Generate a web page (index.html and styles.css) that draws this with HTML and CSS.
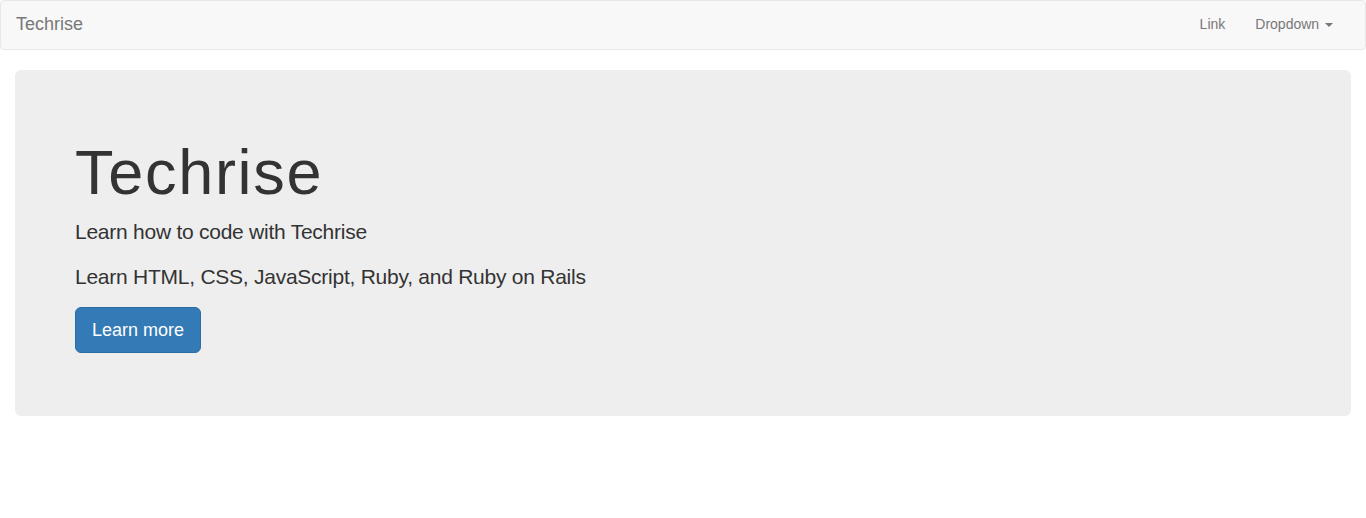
FILE: index.html
```html
<!DOCTYPE html>
<html lang="en">
<head>
<meta charset="utf-8">
<title>Techrise</title>
<link rel="stylesheet" href="styles.css">
</head>
<body>
<nav class="navbar">
  <div class="navbar-inner">
    <a class="brand" href="#">Techrise</a>
    <ul class="nav">
      <li><a href="#">Link</a></li>
      <li><a href="#">Dropdown <span class="caret"></span></a></li>
    </ul>
  </div>
</nav>
<div class="container">
  <div class="jumbotron">
    <h1>Techrise</h1>
    <p>Learn how to code with Techrise</p>
    <p>Learn HTML, CSS, JavaScript, Ruby, and Ruby on Rails</p>
    <p><a class="btn" href="#">Learn more</a></p>
  </div>
</div>
</body>
</html>
```
FILE: styles.css
```css
* { box-sizing: border-box; }
html, body {
  margin: 0;
  padding: 0;
}
body {
  font-family: "Liberation Sans", Arial, sans-serif;
  font-size: 14px;
  line-height: 1.42857143;
  color: #333;
  background: #fff;
}
a { text-decoration: none; }

.navbar {
  min-height: 50px;
  margin-bottom: 20px;
  background: #f8f8f8;
  border: 1px solid #e7e7e7;
  border-radius: 4px;
}
.navbar-inner {
  display: flex;
  justify-content: space-between;
  align-items: stretch;
  padding: 0 17px 0 0;
}
.brand {
  height: 48px;
  padding: 13px 15px 15px 15px;
  font-size: 18px;
  line-height: 20px;
  color: #777;
}
.nav {
  display: flex;
  list-style: none;
  margin: 0;
  padding: 0;
}
.nav a {
  display: block;
  padding: 13px 15px 15px;
  line-height: 20px;
  color: #777;
}
.caret {
  display: inline-block;
  width: 0;
  height: 0;
  margin-left: 2px;
  vertical-align: middle;
  border-top: 4px solid;
  border-right: 4px solid transparent;
  border-left: 4px solid transparent;
}

.container {
  padding: 0 15px;
}
.jumbotron {
  padding: 48px 60px;
  margin-bottom: 30px;
  background: #eee;
  border-radius: 6px;
}
.jumbotron h1 {
  margin: 20px 0 10px;
  font-size: 63px;
  font-weight: 500;
  line-height: 1.1;
  letter-spacing: 1.7px;
  color: #333;
}
.jumbotron p {
  margin: 0 0 15px;
  font-size: 21px;
  line-height: 30px;
  font-weight: 300;
  letter-spacing: -0.25px;
}
.lead-space { display: block; }
.btn {
  display: inline-block;
  padding: 10px 16px;
  font-size: 18px;
  line-height: 24px;
  letter-spacing: 0;
  color: #fff;
  background: #337ab7;
  border: 1px solid #2e6da4;
  border-radius: 6px;
  vertical-align: middle;
}
```
